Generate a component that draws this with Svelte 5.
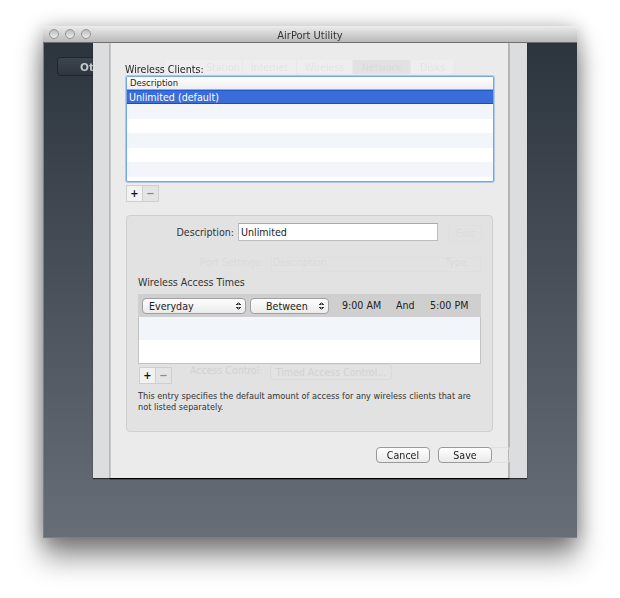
<script>
	let clients = ['Unlimited (default)', '', '', '', '', ''];
	let tabs = [
		{ label: 'Station', w: 78, first: true },
		{ label: 'Internet', w: 54 },
		{ label: 'Wireless', w: 56 },
		{ label: 'Network', w: 58, active: true },
		{ label: 'Disks', w: 44 }
	];
</script>

<div class="page">
	<div class="window">
		<header class="titlebar">
			<div class="lights">
				<span class="light"></span>
				<span class="light"></span>
				<span class="light"></span>
			</div>
			<span class="title">AirPort Utility</span>
		</header>

		<div class="content">
			<button class="back-other">Other</button>

			<div class="outer-sheet">
				<div class="sheet">
					<!-- the page behind the sheet shows through faintly -->
					<div class="ghost-tabs">
						{#each tabs as tab}
							<span class="ghost-tab" class:active={tab.active} class:first={tab.first} style="width: {tab.w}px">{tab.label}</span>
						{/each}
					</div>
					<div class="ghost ghost-edit">Edit</div>
					<div class="ghost ghost-row"></div>
					<div class="ghost ghost-port">Port Settings:</div>
					<div class="ghost ghost-desc">Description</div>
					<div class="ghost ghost-type">Type</div>
					<div class="ghost ghost-enable">Access Control:</div>
					<div class="ghost ghost-timed">Timed Access Control...</div>
					<div class="ghost ghost-done"></div>

					<div class="clients-label">Wireless Clients:</div>
					<div class="list">
						<div class="list-head">Description</div>
						{#each clients as client, i}
							<div class="list-row" class:selected={i === 0} class:alt={i % 2 === 1}>{client}</div>
						{/each}
					</div>
					<div class="plus-minus">
						<span class="pm-btn">+</span>
						<span class="pm-btn off">−</span>
					</div>

					<section class="panel">
						<div class="desc-row">
							<label class="desc-label" for="desc">Description:</label>
							<input id="desc" class="desc-input" type="text" value="Unlimited" />
						</div>

						<h3 class="times-title">Wireless Access Times</h3>
						<div class="times">
							<div class="times-head">
								<span class="select everyday">Everyday<i class="arrows"></i></span>
								<span class="select between">Between<i class="arrows"></i></span>
								<span class="time t1">9:00 AM</span>
								<span class="time t2">And</span>
								<span class="time t3">5:00 PM</span>
							</div>
							<div class="times-row alt"></div>
							<div class="times-row"></div>
						</div>
						<div class="plus-minus small">
							<span class="pm-btn">+</span>
							<span class="pm-btn off">−</span>
						</div>
						<p class="note">This entry specifies the default amount of access for any wireless clients that are not listed separately.</p>
					</section>

					<div class="actions">
						<button class="push">Cancel</button>
						<button class="push">Save</button>
					</div>
				</div>
			</div>
		</div>
	</div>
</div>

<style>
	:global(body) {
		margin: 0;
		background: #fff;
	}

	.page {
		width: 620px;
		height: 598px;
		padding: 26px 43px 0;
		box-sizing: border-box;
		overflow: hidden;
		font-family: "DejaVu Sans Condensed", "DejaVu Sans", sans-serif;
		font-stretch: condensed;
		font-size: 10.6px;
		color: #222;
	}

	.window {
		width: 534px;
		height: 512px;
		border-radius: 4px 4px 0 0;
		box-shadow: 0 20px 28px rgba(0, 0, 0, 0.42), 0 2px 20px rgba(0, 0, 0, 0.32);
		display: flex;
		flex-direction: column;
		filter: blur(0.3px);
	}

	.titlebar {
		height: 17px;
		flex: none;
		position: relative;
		display: flex;
		align-items: center;
		justify-content: center;
		background: linear-gradient(#ececec, #b9b9b9);
		border-bottom: 1px solid #6e6e6e;
		border-radius: 4px 4px 0 0;
		box-sizing: border-box;
	}

	.lights {
		position: absolute;
		left: 6px;
		top: 3px;
		display: flex;
		gap: 6px;
	}

	.light {
		width: 8px;
		height: 8px;
		border-radius: 50%;
		border: 1px solid #939393;
		background: linear-gradient(#bdbdbd, #ececec);
	}

	.title {
		font-size: 11px;
		color: #333;
		padding-top: 2px;
	}

	.content {
		flex: 1;
		position: relative;
		background: linear-gradient(#2c343d, #676e77);
		padding: 0 50px;
		box-shadow: inset 0 -1px 0 #7b7f85, inset 1px 0 0 #7b7f85;
	}

	.back-other {
		position: absolute;
		left: 14px;
		top: 14px;
		width: 120px;
		height: 19px;
		padding: 0 0 0 22px;
		text-align: left;
		border: 1px solid #20262c;
		border-radius: 3px;
		background: linear-gradient(#3c444d, #2f363e);
		color: #c3c8cd;
		font: bold 10.5px "DejaVu Sans", sans-serif;
	}

	.outer-sheet {
		position: relative;
		width: 434px;
		height: 435px;
		box-sizing: border-box;
		padding: 0 18px 0 17px;
		background: #dcdddf;
		box-shadow: 0 1px 1px rgba(0, 0, 0, 0.6);
	}

	.sheet {
		position: relative;
		height: 100%;
		background: #ebebeb;
		border-left: 1px solid #c8c8c8;
		border-right: 1px solid #b4b4b4;
		box-shadow: 0 1px 1px #000;
		box-sizing: border-box;
		padding: 20px 15px 0 14px;
		display: flex;
		flex-direction: column;
	}

	/* faint page underneath */
	.ghost-tabs {
		position: absolute;
		left: 54px;
		top: 17px;
		display: flex;
	}

	.ghost-tab {
		height: 14px;
		line-height: 14px;
		text-align: center;
		color: #e3e3e3;
		background: #eeeeee;
		font-size: 10.5px;
		border-right: 1px solid #e8e8e8;
		box-sizing: border-box;
	}

	.ghost-tab.first {
		text-align: left;
		padding-left: 41px;
	}

	.ghost-tab.active {
		background: #e2e2e2;
		color: #d9d9d9;
	}

	.ghost {
		position: absolute;
		z-index: 1;
		color: #dadada;
		font-size: 10.5px;
		white-space: nowrap;
	}

	.ghost-edit {
		left: 337px;
		top: 182px;
		width: 32px;
		height: 15px;
		line-height: 15px;
		text-align: center;
		border: 1px solid #dfdfdf;
		border-radius: 3px;
		color: #dcdcdc;
	}

	.ghost-row {
		left: 160px;
		top: 214px;
		width: 208px;
		height: 13px;
		border: 1px solid #dfdfdf;
	}

	.ghost-port {
		left: 89px;
		top: 213px;
	}

	.ghost-desc {
		left: 162px;
		top: 213px;
	}

	.ghost-type {
		left: 334px;
		top: 213px;
	}

	.ghost-enable {
		left: 79px;
		top: 321px;
		color: #d2d2d2;
	}

	.ghost-timed {
		left: 159px;
		top: 321px;
		width: 120px;
		height: 14px;
		line-height: 14px;
		text-align: center;
		border: 1px solid #dadada;
		border-radius: 3px;
		color: #d2d2d2;
	}

	.ghost-done {
		left: 380px;
		top: 404px;
		width: 18px;
		height: 14px;
		border: 1px solid #e0e0e0;
		border-left: 0;
		border-radius: 0 3px 3px 0;
	}

	.clients-label {
		position: relative;
		height: 13px;
		line-height: 13px;
		color: #222;
	}

	.list {
		position: relative;
		width: 368px;
		height: 106px;
		margin-left: 1px;
		box-sizing: border-box;
		overflow: hidden;
		background: #fff;
		border: 1px solid #72a9e2;
		border-radius: 2px;
		box-shadow: 0 0 0 1px rgba(114, 169, 226, 0.5);
	}

	.list-head {
		height: 12px;
		line-height: 12px;
		padding-left: 3px;
		font-size: 9.4px;
		background: linear-gradient(#fff, #eeeeee);
		border-bottom: 1px solid #a9a9a9;
	}

	.list-row {
		height: 14.6px;
		line-height: 14px;
		padding-left: 2px;
		box-sizing: border-box;
	}

	.list-row.alt {
		background: #f2f5fa;
	}

	.list-row.selected {
		height: 14px;
		background: #3a6dd8;
		border-top: 1px solid #1f5bd6;
		border-bottom: 1px solid #0f4fd0;
		color: #fff;
		line-height: 12px;
	}

	.plus-minus {
		position: relative;
		display: flex;
		margin: 3px 0 0 1px;
		width: 34px;
		height: 17px;
		flex: none;
	}

	.pm-btn {
		width: 17px;
		height: 17px;
		box-sizing: border-box;
		text-align: center;
		line-height: 15px;
		font-size: 11px;
		font-weight: bold;
		border: 1px solid #cfcfcf;
		background: #f2f2f2;
		color: #111;
	}

	.pm-btn.off {
		margin-left: -1px;
		background: #e4e4e4;
		color: #8a8a8a;
	}

	.panel {
		position: relative;
		margin: 13px 0 0 1px;
		width: 367px;
		height: 217px;
		box-sizing: border-box;
		background: #e2e2e2;
		border: 1px solid #d0d0d0;
		border-radius: 4px;
		padding: 7px 11px 0;
	}

	.desc-row {
		display: flex;
		align-items: center;
		justify-content: flex-end;
		width: 300px;
		gap: 4px;
	}

	.desc-label {
		color: #333;
	}

	.desc-input {
		width: 200px;
		height: 18px;
		box-sizing: border-box;
		padding: 0 2px;
		border: 1px solid #bdbdbd;
		border-top-color: #a9a9a9;
		background: #fff;
		font: 10.6px "DejaVu Sans Condensed", "DejaVu Sans", sans-serif;
		font-stretch: condensed;
		color: #222;
		border-radius: 0;
	}

	.times-title {
		margin: 35px 0 0;
		height: 13px;
		line-height: 13px;
		font-size: 10.6px;
		font-weight: normal;
		color: #333;
	}

	.times {
		margin-top: 5px;
		width: 343px;
		height: 70px;
		background: #fff;
		box-sizing: border-box;
		border: 1px solid #c2c2c2;
		border-top: 0;
	}

	.times-head {
		position: relative;
		height: 23px;
		background: #cfcfcf;
		margin: 0 -1px;
	}

	.select {
		position: absolute;
		top: 4px;
		height: 16px;
		line-height: 14px;
		box-sizing: border-box;
		border: 1px solid #a0a0a0;
		border-radius: 4px;
		background: linear-gradient(#fdfdfd, #ebebeb);
		color: #222;
	}

	.everyday {
		left: 4px;
		width: 104px;
		padding-left: 6px;
	}

	.between {
		left: 112px;
		width: 79px;
		padding-left: 15px;
	}

	.arrows {
		position: absolute;
		right: 4px;
		top: 3px;
		width: 5px;
		height: 8px;
		background:
			linear-gradient(to top left, #333 50%, transparent 50%) left top / 50% 3px no-repeat,
			linear-gradient(to top right, #333 50%, transparent 50%) right top / 50% 3px no-repeat,
			linear-gradient(to bottom left, #333 50%, transparent 50%) left bottom / 50% 3px no-repeat,
			linear-gradient(to bottom right, #333 50%, transparent 50%) right bottom / 50% 3px no-repeat;
	}

	.time {
		position: absolute;
		top: 5px;
		color: #222;
		white-space: nowrap;
	}

	.t1 {
		left: 204px;
	}

	.t2 {
		left: 258px;
	}

	.t3 {
		left: 292px;
	}

	.times-row {
		height: 23px;
	}

	.times-row.alt {
		background: #f2f5fa;
	}

	.note {
		margin: 7px 0 0 0;
		width: 345px;
		font-size: 9.1px;
		line-height: 11px;
		color: #333;
	}

	.actions {
		position: relative;
		display: flex;
		justify-content: flex-end;
		gap: 8px;
		margin-top: 15px;
		width: 367px;
	}

	.push {
		width: 54px;
		height: 16px;
		padding: 0;
		box-sizing: border-box;
		border: 1px solid #9a9a9a;
		border-radius: 4px;
		background: linear-gradient(#fff, #e9e9e9);
		font: 10.6px "DejaVu Sans Condensed", "DejaVu Sans", sans-serif;
		font-stretch: condensed;
		color: #222;
	}
</style>
